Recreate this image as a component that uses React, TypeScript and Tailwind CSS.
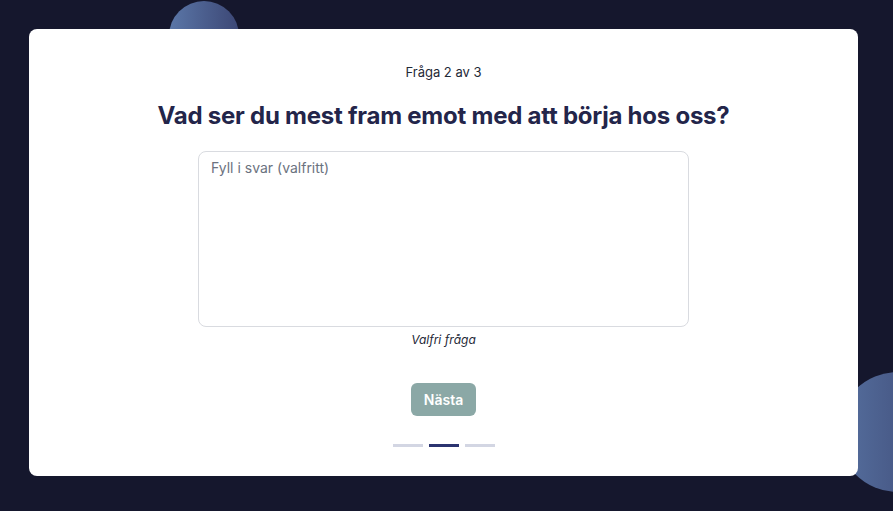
export default function App() {
  return (
    <main
      className="relative w-[893px] h-[511px] overflow-hidden bg-[#15172d] pt-[29px] px-[29px]"
      style={{ fontFamily: "Inter, 'Noto Sans', sans-serif" }}
    >
      {/* decorative circles */}
      <div className="absolute left-[169px] top-[1px] w-[70px] h-[70px] rounded-full bg-gradient-to-r from-[#5b77a8] to-[#3c4775]" />
      <div className="absolute left-[838px] top-[372px] w-[120px] h-[120px] rounded-full bg-gradient-to-r from-[#56709f] to-[#3a4470]" />

      <section className="relative z-10 w-[829px] h-[447px] bg-white rounded-lg flex flex-col items-center pt-[62px]">
        <p className="text-[13px] leading-5 text-[#1f2937] -mt-[29px]">Fråga 2 av 3</p>

        <h1 className="mt-[18px] text-2xl leading-8 font-bold tracking-[-0.01em] text-[#23254a]">
          Vad ser du mest fram emot med att börja hos oss?
        </h1>

        <textarea
          placeholder="Fyll i svar (valfritt)"
          className="mt-[19px] w-[491px] h-[176px] resize-none rounded-lg border border-[#d9dbe0] px-3 py-[6px] text-sm leading-5 text-[#111827] placeholder:text-[#6b7280] outline-none"
        />

        <p className="mt-[5px] text-xs leading-4 italic text-[#1f2937]">Valfri fråga</p>

        <button className="mt-[35px] w-[65px] h-[33px] rounded-md bg-[#8ba8a6] text-white text-sm font-semibold">
          Nästa
        </button>

        <div className="mt-[28px] flex gap-[6px]">
          <span className="w-[30px] h-[3px] bg-[#d3d6e3]" />
          <span className="w-[30px] h-[3px] bg-[#2b3470]" />
          <span className="w-[30px] h-[3px] bg-[#d3d6e3]" />
        </div>
      </section>
    </main>
  );
}
